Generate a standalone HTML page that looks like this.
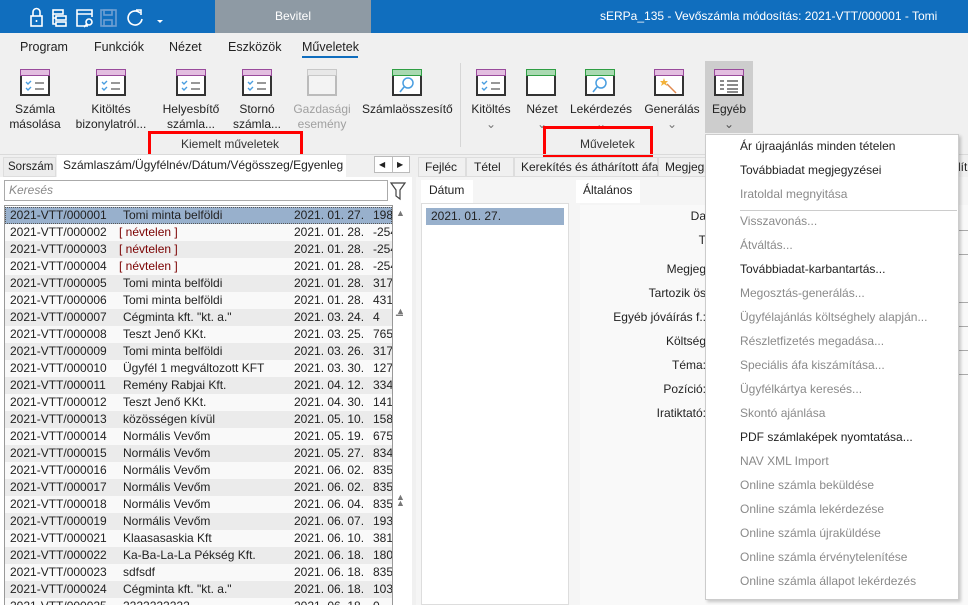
<!DOCTYPE html>
<html style="overflow:hidden;width:968px;height:605px"><head><meta charset="utf-8"><style>
*{box-sizing:border-box;margin:0;padding:0}
html,body{overflow:hidden}
body{width:968px;height:605px;overflow:hidden;background:#f0f0f0;font-family:"Segoe UI","Liberation Sans","DejaVu Sans",sans-serif;font-size:12px;color:#222;position:relative}
.a{position:absolute;white-space:nowrap}
.title{left:0;top:0;width:968px;height:33px;background:#106ebe}
.ico{position:absolute;width:30px;height:27px;border:2px solid #333;background:#fff}
.ico .bar{position:absolute;left:-2px;top:-2px;width:30px;height:7px;border:1.5px solid #9a4b9c;background:#e3bde0}
.ico .bar.g{border-color:#2f9e44;background:#a9d9b1}
.ico.dis{border-color:#bbb;background:#f3f3f3}
.ico.dis .bar{border-color:#c8c8c8;background:#e8e8e8}
.lbl{position:absolute;text-align:center;font-size:12px;line-height:15px;color:#222}
.dis2{color:#a0a0a0}
.row{position:absolute;left:5px;width:387px;height:17px;font-size:12px;line-height:17px}
.row span{position:absolute}
.mi{position:absolute;left:740px;font-size:12px;color:#222}
.mi.d{color:#8a8a8a}
.fl{position:absolute;text-align:right;right:262px;font-size:12px}
#rows{position:absolute;left:0;top:0;width:412px;height:605px;overflow:hidden}
</style></head><body>
<div class="a title"></div>
<div class="a" style="left:215px;top:0;width:156px;height:33px;background:#8e9aa4;color:#fff;text-align:center;line-height:32px;font-size:12px">Bevitel</div>
<div class="a" style="left:600px;top:8px;color:#fff;font-size:12px;line-height:16px">sERPa_135 - Vevőszámla módosítás: 2021-VTT/000001 - Tomi</div>
<svg class="a" style="left:28px;top:5px" width="150" height="24" viewBox="0 0 150 24" fill="none" stroke="#fff" stroke-width="1.6">
<rect x="3" y="11" width="11" height="10"/><path d="M5 11V7a3.5 3.5 0 0 1 7 0v4"/><path d="M8.5 15v2"/>
<rect x="25" y="5" width="10" height="4"/><rect x="28" y="11" width="10" height="4"/><rect x="28" y="17" width="10" height="4"/><path d="M25 9v10h3M25 13h3"/>
<path d="M60 21H49V5h15v7M49 9h15"/><circle cx="61" cy="17" r="3"/><path d="M59 19l-3 3"/>
<g stroke="#6e9fd2"><rect x="73" y="5" width="15" height="16"/><rect x="76" y="5" width="8" height="5"/><rect x="76" y="15" width="8" height="6"/></g>
<path d="M112 8a7 7 0 1 0 2 6"/><path d="M108 5h5v5"/>
<path d="M129 15l3 3 3-3z" fill="#fff" stroke="none"/>
</svg>
<div class="a" style="top:40px;left:20px;font-size:12.5px">Program</div>
<div class="a" style="top:40px;left:94px;font-size:12.5px">Funkciók</div>
<div class="a" style="top:40px;left:169px;font-size:12.5px">Nézet</div>
<div class="a" style="top:40px;left:228px;font-size:12.5px">Eszközök</div>
<div class="a" style="top:40px;left:302px;font-size:12.5px">Műveletek</div>
<div class="a" style="top:56px;left:302px;width:56px;height:2px;background:#106ebe"></div>
<div class="ico" style="left:20px;top:69px"><div class="bar"></div><svg width="26" height="20" style="position:absolute;top:5px;left:0"><path d="M4 6l2 2 3-3M4 12l2 2 3-3" stroke="#4a9ee0" stroke-width="1.4" fill="none"/><path d="M13 7h9M13 13h9" stroke="#777" stroke-width="1.5"/></svg></div>
<div class="ico" style="left:96px;top:69px"><div class="bar"></div><svg width="26" height="20" style="position:absolute;top:5px;left:0"><path d="M4 6l2 2 3-3M4 12l2 2 3-3" stroke="#4a9ee0" stroke-width="1.4" fill="none"/><path d="M13 7h9M13 13h9" stroke="#777" stroke-width="1.5"/></svg></div>
<div class="ico" style="left:176px;top:69px"><div class="bar"></div><svg width="26" height="20" style="position:absolute;top:5px;left:0"><path d="M4 6l2 2 3-3M4 12l2 2 3-3" stroke="#4a9ee0" stroke-width="1.4" fill="none"/><path d="M13 7h9M13 13h9" stroke="#777" stroke-width="1.5"/></svg></div>
<div class="ico" style="left:242px;top:69px"><div class="bar"></div><svg width="26" height="20" style="position:absolute;top:5px;left:0"><path d="M4 6l2 2 3-3M4 12l2 2 3-3" stroke="#4a9ee0" stroke-width="1.4" fill="none"/><path d="M13 7h9M13 13h9" stroke="#777" stroke-width="1.5"/></svg></div>
<div class="ico dis" style="left:307px;top:69px"><div class="bar"></div></div>
<div class="ico" style="left:392px;top:69px"><div class="bar g"></div><svg width="26" height="20" style="position:absolute;top:3px;left:0"><circle cx="14" cy="9" r="5" stroke="#4a9ee0" stroke-width="1.5" fill="none"/><path d="M10 13l-4 5" stroke="#4a9ee0" stroke-width="1.6"/></svg></div>
<div class="a" style="left:460px;top:63px;width:1px;height:84px;background:#d6d6d6"></div>
<div class="ico" style="left:476px;top:69px"><div class="bar"></div><svg width="26" height="20" style="position:absolute;top:5px;left:0"><path d="M4 6l2 2 3-3M4 12l2 2 3-3" stroke="#4a9ee0" stroke-width="1.4" fill="none"/><path d="M13 7h9M13 13h9" stroke="#777" stroke-width="1.5"/></svg></div>
<div class="ico" style="left:526px;top:69px"><div class="bar g"></div></div>
<div class="ico" style="left:585px;top:69px"><div class="bar g"></div><svg width="26" height="20" style="position:absolute;top:3px;left:0"><circle cx="14" cy="9" r="5" stroke="#4a9ee0" stroke-width="1.5" fill="none"/><path d="M10 13l-4 5" stroke="#4a9ee0" stroke-width="1.6"/></svg></div>
<div class="ico" style="left:654px;top:69px"><div class="bar"></div><svg width="26" height="20" style="position:absolute;top:3px;left:0"><path d="M8 4l1 3 3 0-2 2 1 3-3-2-3 2 1-3-2-2 3 0z" fill="#f3b23a"/><path d="M11 10l9 9" stroke="#e08a50" stroke-width="1.5"/></svg></div>
<div class="a" style="left:705px;top:61px;width:48px;height:72px;background:#cdcdcd"></div>
<div class="ico" style="left:714px;top:69px"><div class="bar"></div><svg width="26" height="20" style="position:absolute;top:5px;left:0"><path d="M4 5h4M4 9h4M4 13h4M11 5h11M11 9h11M11 13h11M11 16h11" stroke="#444" stroke-width="1.3"/></svg></div>
<div class="lbl" style="left:5px;top:102px;width:60px">Számla<br>másolása</div>
<div class="lbl" style="left:73px;top:102px;width:76px">Kitöltés<br>bizonylatról...</div>
<div class="lbl" style="left:158px;top:102px;width:66px">Helyesbítő<br>számla...</div>
<div class="lbl" style="left:230px;top:102px;width:54px">Stornó<br>számla...</div>
<div class="lbl dis2" style="left:292px;top:102px;width:60px">Gazdasági<br>esemény</div>
<div class="lbl" style="left:362px;top:102px;width:90px">Számlaösszesítő</div>
<div class="lbl" style="left:468px;top:102px;width:46px">Kitöltés<br><span style="color:#777">⌄</span></div>
<div class="lbl" style="left:522px;top:102px;width:40px">Nézet<br><span style="color:#777">⌄</span></div>
<div class="lbl" style="left:570px;top:102px;width:62px">Lekérdezés<br><span style="color:#777">⌄</span></div>
<div class="lbl" style="left:642px;top:102px;width:60px">Generálás<br><span style="color:#777">⌄</span></div>
<div class="lbl" style="left:708px;top:102px;width:42px">Egyéb<br><span style="color:#555">⌄</span></div>
<div class="a" style="left:181px;top:137px;font-size:12px;color:#333">Kiemelt műveletek</div>
<div class="a" style="left:580px;top:137px;font-size:12px;color:#333">Műveletek</div>
<div class="a" style="left:148px;top:131px;width:155px;height:26px;border:3px solid #f00"></div>
<div class="a" style="left:543px;top:126px;width:110px;height:31px;border:3px solid #f00"></div>
<div class="a" style="left:0;top:154px;width:968px;height:1px;background:#dadada"></div>
<div class="a" style="left:3px;top:157px;width:53px;height:20px;background:#ececec;border:1px solid #ddd;line-height:18px;padding-left:4px;font-size:11.5px;overflow:hidden">Sorszám</div>
<div class="a" style="left:57px;top:155px;width:289px;height:22px;background:#fff;line-height:20px;padding-left:6px">Számlaszám/Ügyfélnév/Dátum/Végösszeg/Egyenleg</div>
<div class="a" style="left:374px;top:156px;width:36px;height:17px;border:1px solid #bbb;background:#fff;font-size:8px;line-height:15px"><span style="position:absolute;left:4px">◀</span><span style="position:absolute;left:17px;top:0;width:1px;height:15px;background:#bbb"></span><span style="position:absolute;left:22px">▶</span></div>
<div class="a" style="left:0;top:177px;width:412px;height:428px;background:#fff"></div>
<div class="a" style="left:4px;top:180px;width:384px;height:21px;border:1px solid #aaa;background:#fff;color:#888;font-style:italic;padding-left:4px;line-height:19px">Keresés</div>
<svg class="a" style="left:389px;top:181px" width="18" height="20"><path d="M2 2h14l-5 7v9l-4-3V9z" fill="none" stroke="#444" stroke-width="1.2"/></svg>
<div class="a" style="left:4px;top:205px;width:389px;height:400px;border:1px solid #999;border-bottom:none;background:#fff"></div>
<div class="a" style="left:393px;top:206px;width:17px;height:399px;background:#fff"></div>
<div class="a" style="left:396px;top:208px;font-size:9px;color:#777">▲</div>
<div class="a" style="left:396px;top:307px;font-size:9px;color:#777;line-height:9px">▲<br>▔</div>
<div class="a" style="left:396px;top:494px;font-size:9px;color:#777;line-height:6px">▲<br>▲</div>
<div id="rows"></div>
<div class="a" style="left:416px;top:157px;width:552px;height:20px;background:#f0f0f0"></div>
<div class="a" style="left:418px;top:157px;width:48px;height:20px;border:1px solid #ddd;line-height:18px;padding-left:6px">Fejléc</div>
<div class="a" style="left:466px;top:157px;width:48px;height:20px;border:1px solid #ddd;line-height:18px;padding-left:7px">Tétel</div>
<div class="a" style="left:514px;top:157px;width:144px;height:20px;border:1px solid #ddd;line-height:18px;padding-left:6px">Kerekítés és áthárított áfa</div>
<div class="a" style="left:658px;top:157px;width:50px;height:20px;border:1px solid #ddd;line-height:18px;padding-left:6px">Megjeg</div>
<div class="a" style="left:958px;top:157px;line-height:20px">lít</div>
<div class="a" style="left:416px;top:177px;width:552px;height:428px;background:#f5f5f5"></div>
<div class="a" style="left:421px;top:180px;width:52px;height:23px;background:#fff;line-height:21px;padding-left:8px">Dátum</div>
<div class="a" style="left:421px;top:203px;width:148px;height:402px;background:#fff;border:1px solid #ddd"></div>
<div class="a" style="left:426px;top:208px;width:138px;height:17px;background:#98b0cc;line-height:17px;padding-left:5px">2021. 01. 27.</div>
<div class="a" style="left:576px;top:180px;width:64px;height:23px;background:#fff;line-height:21px;padding-left:7px">Általános</div>
<div class="a" style="left:580px;top:205px;width:388px;height:400px;background:#f9f9f9"></div>
<div class="fl" style="top:209px">Da</div>
<div class="fl" style="top:233px">T</div>
<div class="fl" style="top:262px">Megjeg</div>
<div class="fl" style="top:286px">Tartozik ös</div>
<div class="fl" style="top:310px">Egyéb jóváírás f.:</div>
<div class="fl" style="top:334px">Költség</div>
<div class="fl" style="top:358px">Téma:</div>
<div class="fl" style="top:382px">Pozíció:</div>
<div class="fl" style="top:406px">Iratiktató:</div>
<div class="a" style="left:958px;top:230px;width:10px;border-top:1px solid #aaa"></div>
<div class="a" style="left:958px;top:254px;width:10px;border-top:1px solid #aaa"></div>
<div class="a" style="left:958px;top:302px;width:10px;border-top:1px solid #aaa"></div>
<div class="a" style="left:958px;top:326px;width:10px;border-top:1px solid #aaa"></div>
<div class="a" style="left:958px;top:350px;width:10px;border-top:1px solid #aaa"></div>
<div class="a" style="left:958px;top:374px;width:10px;border-top:1px solid #aaa"></div>
<div class="a" style="left:705px;top:134px;width:254px;height:466px;background:#fff;border:1px solid #ccc;box-shadow:2px 2px 3px rgba(0,0,0,.2)"></div>
<div class="a" style="left:740px;top:210px;width:217px;height:1px;background:#ccc"></div>
<div class="mi" style="top:139px">Ár újraajánlás minden tételen</div>
<div class="mi" style="top:163px">Továbbiadat megjegyzései</div>
<div class="mi d" style="top:187px">Iratoldal megnyitása</div>
<div class="mi d" style="top:214px">Visszavonás...</div>
<div class="mi d" style="top:238px">Átváltás...</div>
<div class="mi" style="top:262px">Továbbiadat-karbantartás...</div>
<div class="mi d" style="top:286px">Megosztás-generálás...</div>
<div class="mi d" style="top:310px">Ügyfélajánlás költséghely alapján...</div>
<div class="mi d" style="top:334px">Részletfizetés megadása...</div>
<div class="mi d" style="top:358px">Speciális áfa kiszámítása...</div>
<div class="mi d" style="top:382px">Ügyfélkártya keresés...</div>
<div class="mi d" style="top:406px">Skontó ajánlása</div>
<div class="mi" style="top:430px">PDF számlaképek nyomtatása...</div>
<div class="mi d" style="top:454px">NAV XML Import</div>
<div class="mi d" style="top:478px">Online számla beküldése</div>
<div class="mi d" style="top:502px">Online számla lekérdezése</div>
<div class="mi d" style="top:526px">Online számla újraküldése</div>
<div class="mi d" style="top:550px">Online számla érvénytelenítése</div>
<div class="mi d" style="top:574px">Online számla állapot lekérdezés</div>
<script>
var d=[["000001","Tomi minta belföldi","01. 27.","198"],["000002","[ névtelen ]","01. 28.","-254"],["000003","[ névtelen ]","01. 28.","-254"],["000004","[ névtelen ]","01. 28.","-254"],["000005","Tomi minta belföldi","01. 28.","317"],["000006","Tomi minta belföldi","01. 28.","431"],["000007","Cégminta kft. \"kt. a.\"","03. 24.","4"],["000008","Teszt Jenő KKt.","03. 25.","765"],["000009","Tomi minta belföldi","03. 26.","317"],["000010","Ügyfél 1 megváltozott KFT","03. 30.","127"],["000011","Remény Rabjai Kft.","04. 12.","334"],["000012","Teszt Jenő KKt.","04. 30.","141"],["000013","közösségen kívül","05. 10.","158"],["000014","Normális Vevőm","05. 19.","675"],["000015","Normális Vevőm","05. 27.","834"],["000016","Normális Vevőm","06. 02.","835"],["000017","Normális Vevőm","06. 02.","835"],["000018","Normális Vevőm","06. 04.","835"],["000019","Normális Vevőm","06. 07.","193"],["000021","Klaasasaskia Kft","06. 10.","381"],["000022","Ka-Ba-La-La Pékség Kft.","06. 18.","180"],["000023","sdfsdf","06. 18.","835"],["000024","Cégminta kft. \"kt. a.\"","06. 18.","103"],["000025","2222222222","06. 18.","0"]];
var h="";for(var i=0;i<d.length;i++){var r=d[i],y=207+i*17,bg=i==0?"#98b0cc":(i%2==0?"#ebebeb":"#f9f9f9"),nv=r[1].charAt(0)=="[";
h+='<div class="row" style="top:'+y+'px;background:'+bg+(i==0?';outline:1px dotted #555;outline-offset:-1px':'')+'"><span style="left:5px">2021-VTT/'+r[0]+'</span><span style="left:'+(nv?114:118)+'px;color:'+(nv?'#7a0000':'#222')+'">'+r[1]+'</span><span style="left:289px">2021. '+r[2]+'</span><span style="left:368px;width:19px;overflow:hidden">'+r[3]+'</span></div>';}
document.getElementById("rows").innerHTML=h;
</script>
</body></html>
